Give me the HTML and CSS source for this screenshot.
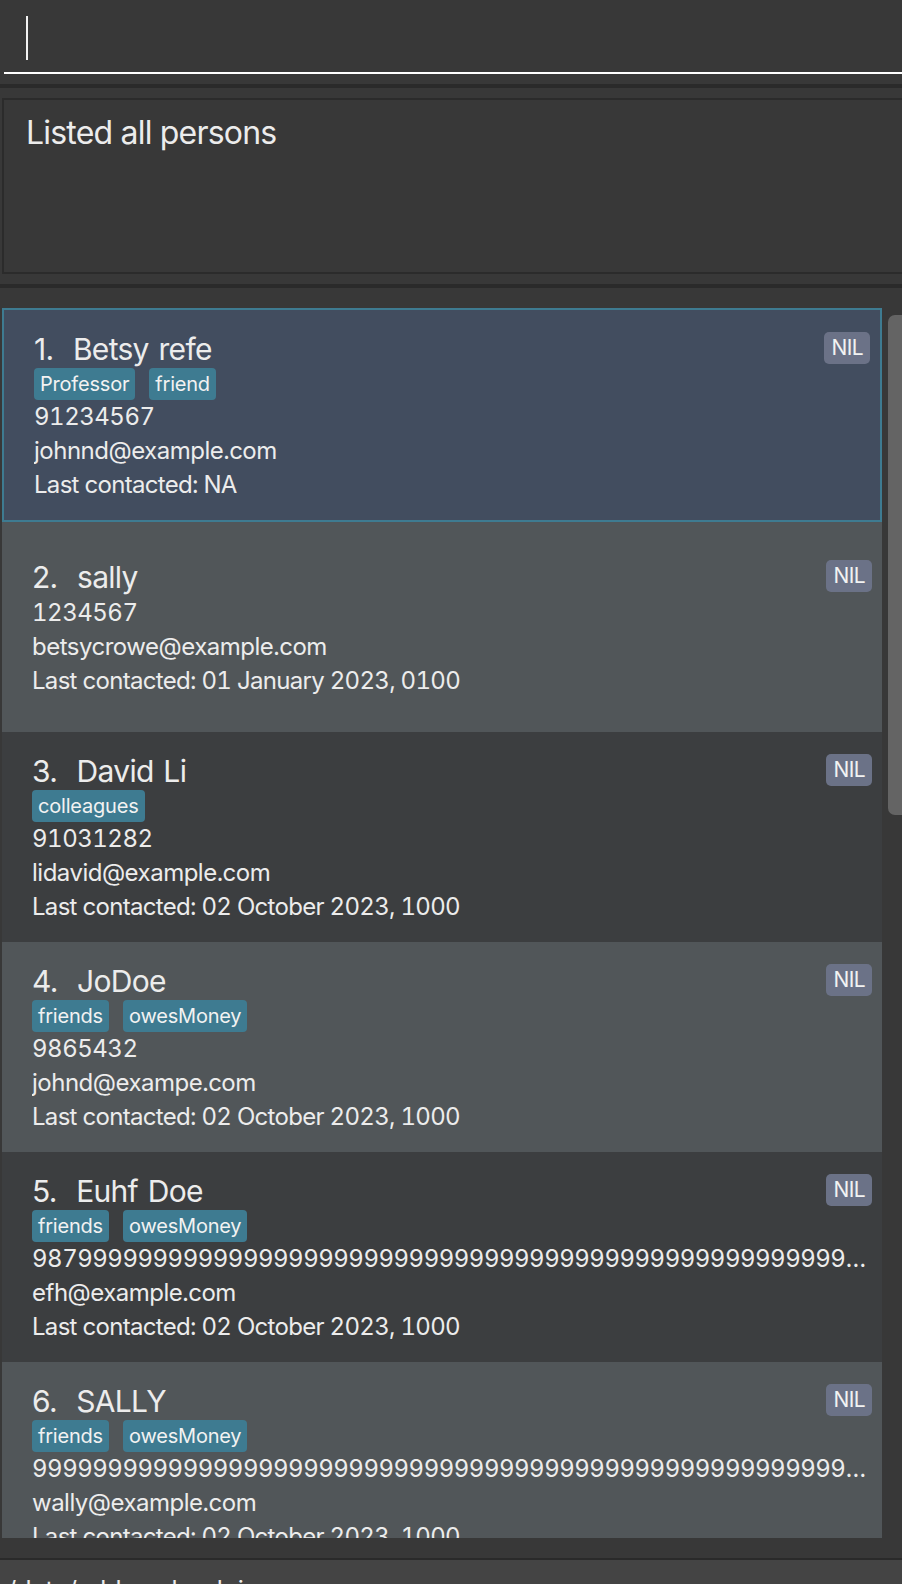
FILE: index.html
```html
<!DOCTYPE html>
<html lang="en">
<head>
<meta charset="utf-8">
<title>Address Book</title>
<link rel="stylesheet" href="styles.css">
</head>
<body>
<div class="app">
  <div class="command-area">
    <div class="command-field"><span class="caret"></span></div>
  </div>
  <div class="divider"></div>
  <div class="result-area">
    <div class="result-box">Listed all persons</div>
  </div>
  <div class="divider"></div>
  <div class="list-area">
    <div class="list-view">
      <div class="cards">
        <div class="card selected">
          <div class="name-row"><div class="name">1.&nbsp;&nbsp;Betsy refe</div><div class="badge">NIL</div></div>
          <div class="tags"><span class="tag">Professor</span><span class="tag">friend</span></div>
          <div class="line">91234567</div>
          <div class="line">johnnd@example.com</div>
          <div class="line contact">Last contacted: NA</div>
        </div>
        <div class="card even">
          <div class="name-row"><div class="name">2.&nbsp;&nbsp;sally</div><div class="badge">NIL</div></div>
          <div class="line">1234567</div>
          <div class="line">betsycrowe@example.com</div>
          <div class="line contact">Last contacted: 01 January 2023, 0100</div>
        </div>
        <div class="card odd">
          <div class="name-row"><div class="name">3.&nbsp;&nbsp;David Li</div><div class="badge">NIL</div></div>
          <div class="tags"><span class="tag">colleagues</span></div>
          <div class="line">91031282</div>
          <div class="line">lidavid@example.com</div>
          <div class="line contact">Last contacted: 02 October 2023, 1000</div>
        </div>
        <div class="card even">
          <div class="name-row"><div class="name">4.&nbsp;&nbsp;JoDoe</div><div class="badge">NIL</div></div>
          <div class="tags"><span class="tag">friends</span><span class="tag">owesMoney</span></div>
          <div class="line">9865432</div>
          <div class="line">johnd@exampe.com</div>
          <div class="line contact">Last contacted: 02 October 2023, 1000</div>
        </div>
        <div class="card odd">
          <div class="name-row"><div class="name">5.&nbsp;&nbsp;Euhf Doe</div><div class="badge">NIL</div></div>
          <div class="tags"><span class="tag">friends</span><span class="tag">owesMoney</span></div>
          <div class="line">98799999999999999999999999999999999999999999999999999999999999999999</div>
          <div class="line">efh@example.com</div>
          <div class="line contact">Last contacted: 02 October 2023, 1000</div>
        </div>
        <div class="card even">
          <div class="name-row"><div class="name">6.&nbsp;&nbsp;SALLY</div><div class="badge">NIL</div></div>
          <div class="tags"><span class="tag">friends</span><span class="tag">owesMoney</span></div>
          <div class="line">99999999999999999999999999999999999999999999999999999999999999999999</div>
          <div class="line">wally@example.com</div>
          <div class="line contact">Last contacted: 02 October 2023, 1000</div>
        </div>
      </div>
      <div class="scrollbar"><div class="thumb"></div></div>
    </div>
  </div>
  <div class="status-bar"><span class="status-text">./data/addressbook.json</span></div>
</div>
</body>
</html>
```

FILE: styles.css
```css
html, body {
  margin: 0;
  padding: 0;
  background: #383838;
}

.app {
  width: 902px;
  height: 1584px;
  overflow: hidden;
  display: flex;
  flex-direction: column;
  background: #383838;
  color: #ececec;
  font-family: Inter, "Liberation Sans", sans-serif;
}

.command-area {
  height: 84px;
  flex: none;
  box-sizing: border-box;
  padding-left: 4px;
}

.command-field {
  height: 74px;
  box-sizing: border-box;
  border-bottom: 2px solid #ffffff;
  padding: 16px 0 0 22px;
}

.caret {
  display: block;
  width: 2px;
  height: 44px;
  background: #f2f2f2;
}

.divider {
  height: 4px;
  flex: none;
  background: #2a2a2a;
}

.result-area {
  flex: none;
  height: 196px;
  box-sizing: border-box;
  padding: 10px 0 10px 2px;
}

.result-box {
  height: 176px;
  box-sizing: border-box;
  border: 2px solid #2b2b2b;
  border-right: none;
  padding: 14px 0 0 22px;
  font-size: 32px;
  letter-spacing: -0.8px;
  line-height: 38px;
}

.list-area {
  flex: none;
  height: 1270px;
  box-sizing: border-box;
  padding: 20px 0;
}

.list-view {
  display: flex;
  height: 1230px;
}

.cards {
  margin-left: 2px;
  width: 880px;
  height: 1230px;
  overflow: hidden;
}

.card {
  height: 210px;
  box-sizing: border-box;
  padding: 4px 10px 0 30px;
  display: flex;
  flex-direction: column;
  justify-content: center;
}

.card.selected {
  height: 214px;
  border: 2px solid #3e7b91;
  background: #424d5f;
}

.card.even {
  background: #515659;
}

.card.odd {
  background: #3c3e40;
}

.name-row {
  display: flex;
  align-items: flex-start;
  margin-bottom: 2px;
}

.name {
  flex: 1;
  font-size: 30px;
  line-height: 34px;
  letter-spacing: -0.7px;
  word-spacing: 2px;
  white-space: nowrap;
}

.badge {
  height: 32px;
  line-height: 32px;
  padding: 0 7px;
  font-size: 21px;
  letter-spacing: -0.6px;
  background: #6b7287;
  border-radius: 5px;
  color: #f2f2f2;
}

.tags {
  display: flex;
  gap: 14px;
  height: 32px;
}

.tag {
  height: 32px;
  line-height: 32px;
  padding: 0 6px;
  font-size: 20px;
  letter-spacing: -0.2px;
  background: #3e7b91;
  border-radius: 4px;
  color: #f2f2f2;
}

.line {
  font-size: 24px;
  line-height: 34px;
  letter-spacing: -0.5px;
  font-variant-numeric: tabular-nums;
  white-space: nowrap;
  overflow: hidden;
  text-overflow: ellipsis;
  padding-right: 2px;
}

.line.contact {
  letter-spacing: -0.7px;
}

.scrollbar {
  width: 20px;
  padding-top: 7px;
  box-sizing: border-box;
}

.thumb {
  margin-left: 6px;
  width: 14px;
  height: 500px;
  background: #646464;
  border-radius: 7px 0 0 7px;
}

.status-bar {
  flex: 1;
  border-top: 2px solid #2a2a2a;
  background: #444444;
  padding: 15px 0 0 0;
  font-size: 25px;
  line-height: 30px;
  white-space: nowrap;
}
```
